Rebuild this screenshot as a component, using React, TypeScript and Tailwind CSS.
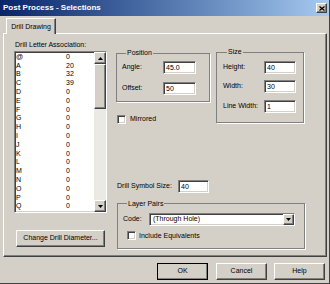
import React from "react";

const rows: [string, string][] = [
  ["@", "0"], ["A", "20"], ["B", "32"], ["C", "39"], ["D", "0"], ["E", "0"],
  ["F", "0"], ["G", "0"], ["H", "0"], ["I", "0"], ["J", "0"], ["K", "0"],
  ["L", "0"], ["M", "0"], ["N", "0"], ["O", "0"], ["P", "0"], ["Q", "0"],
];

// classic win32 bevels
const sunken =
  "bg-white border border-t-[#808080] border-l-[#808080] border-b-white border-r-white shadow-[inset_1px_1px_0_#404040,inset_-1px_-1px_0_#d4d0c8]";
const raised =
  "bg-[#d4d0c8] border border-t-white border-l-white border-b-[#404040] border-r-[#404040] shadow-[inset_-1px_-1px_0_#808080]";
const group = "border border-[#808080] shadow-[1px_1px_0_#fff] min-w-0";

function Arrow({ up }: { up?: boolean }) {
  return (
    <svg width="5" height="3" viewBox="0 0 5 3">
      <path d={up ? "M2.5 0 L5 3 L0 3 Z" : "M0 0 L5 0 L2.5 3 Z"} fill="#000" />
    </svg>
  );
}

function Field({ value, w }: { value: string; w: string }) {
  return (
    <div className={`${sunken} ${w} h-[13px] pl-[2px] flex items-center leading-none`}>{value}</div>
  );
}

function Check() {
  return <div className={`${sunken} w-[9px] h-[9px] shrink-0`} />;
}

function Btn({ label, w, def }: { label: string; w: string; def?: boolean }) {
  return (
    <div
      className={`${w} h-[17px] flex items-center justify-center ${
        def ? "outline outline-1 outline-[#000] -outline-offset-1 " : ""
      }${raised}`}
    >
      {label}
    </div>
  );
}

export default function App() {
  return (
    <div className="w-[330px] h-[284px] bg-[#d4d0c8] border-r border-b border-[#404040] flex flex-col text-[7px] text-black font-['Liberation_Sans',Arial,sans-serif] overflow-hidden">
      {/* title bar */}
      <div className="h-[16px] shrink-0 flex items-center justify-between pl-[3px] pr-[2px] bg-linear-to-r from-[#0a246a] to-[#a6caf0]">
        <span className="text-white font-bold text-[8px]">Post Process - Selections</span>
        <div className={`${raised} w-[11px] h-[10px] flex items-center justify-center`}>
          <svg width="6" height="5" viewBox="0 0 6 5">
            <path d="M0.5 0.5 L5.5 4.5 M5.5 0.5 L0.5 4.5" stroke="#000" strokeWidth="1.3" />
          </svg>
        </div>
      </div>

      {/* tab */}
      <div className="mt-[2px] ml-[6px] flex">
        <div className="relative z-10 -mb-[1px] w-[50px] h-[16px] bg-[#d4d0c8] border-t border-l border-r border-t-white border-l-white border-r-[#404040] shadow-[inset_-1px_0_0_#808080] flex items-start justify-center pt-[3px]">
          Drill Drawing
        </div>
      </div>

      {/* tab page */}
      <div className={`ml-[3px] w-[324px] h-[224px] shrink-0 pt-[6px] pl-[10px] flex gap-[9px] ${raised}`}>
        {/* left column */}
        <div className="w-[93px] flex flex-col">
          <div className="h-[9px] leading-[9px] pl-[1px]">Drill Letter Association:</div>
          <div className={`${sunken} mt-[2px] h-[162px] flex`}>
            <div className="flex-1 pl-[1px]">
              {rows.map(([l, v]) => (
                <div key={l} className="h-[8.8px] flex items-center leading-none">
                  <span className="w-[50px]">{l}</span>
                  <span>{v}</span>
                </div>
              ))}
            </div>
            <div className="w-[12px] flex flex-col bg-[#ebe9e4]">
              <div className={`${raised} h-[12px] flex items-center justify-center`}>
                <Arrow up />
              </div>
              <div className={`${raised} h-[45px]`} />
              <div className="flex-1" />
              <div className={`${raised} h-[12px] flex items-center justify-center`}>
                <Arrow />
              </div>
            </div>
          </div>
          <div className="mt-[17px] ml-[2px]">
            <Btn label="Change Drill Diameter..." w="w-[89px]" />
          </div>
        </div>

        {/* right column */}
        <div className="flex flex-col">
          <div className="flex gap-[6px] items-start">
            <div className="flex flex-col">
              <fieldset className={`${group} mt-[9px] w-[94px] h-[53px] pt-[4px] pl-[5px]`}>
                <legend className="ml-[4px] px-[1px] leading-[8px]">Position</legend>
                <div className="flex items-center">
                  <span className="w-[41px]">Angle:</span>
                  <Field value="45.0" w="w-[33px]" />
                </div>
                <div className="flex items-center mt-[8px]">
                  <span className="w-[41px]">Offset:</span>
                  <Field value="50" w="w-[33px]" />
                </div>
              </fieldset>
              <div className="mt-[12px] ml-[1px] flex items-center gap-[4px]">
                <Check />
                <span>Mirrored</span>
              </div>
            </div>

            <fieldset className={`${group} mt-[8px] w-[88px] h-[75px] pt-[5px] pl-[6px]`}>
              <legend className="ml-[4px] px-[1px] leading-[8px]">Size</legend>
              <div className="flex items-center">
                <span className="w-[41px]">Height:</span>
                <Field value="40" w="w-[32px]" />
              </div>
              <div className="flex items-center mt-[6px]">
                <span className="w-[41px]">Width:</span>
                <Field value="30" w="w-[32px]" />
              </div>
              <div className="flex items-center mt-[7px]">
                <span className="w-[41px]">Line Width:</span>
                <Field value="1" w="w-[32px]" />
              </div>
            </fieldset>
          </div>

          <div className="mt-[55px] ml-[1px] flex items-center">
            <span className="w-[61px]">Drill Symbol Size:</span>
            <Field value="40" w="w-[31px]" />
          </div>

          <fieldset className={`${group} mt-[7px] ml-[1px] w-[188px] h-[49px] pt-[5px] pl-[5px]`}>
            <legend className="ml-[4px] px-[1px] leading-[8px]">Layer Pairs</legend>
            <div className="flex items-center">
              <span className="w-[26px]">Code:</span>
              <div className={`${sunken} w-[146px] h-[13px] flex items-center`}>
                <span className="flex-1 pl-[3px]">(Through Hole)</span>
                <div className={`${raised} w-[11px] h-full flex items-center justify-center`}>
                  <Arrow />
                </div>
              </div>
            </div>
            <div className="mt-[5px] ml-[4px] flex items-center gap-[3px]">
              <Check />
              <span>Include Equivalents</span>
            </div>
          </fieldset>
        </div>
      </div>

      {/* dialog buttons */}
      <div className="mt-[6px] pr-[4px] flex justify-end gap-[7px]">
        <Btn label="OK" w="w-[51px]" def />
        <div className="ml-[1px]">
          <Btn label="Cancel" w="w-[51px]" />
        </div>
        <Btn label="Help" w="w-[51px]" />
      </div>
    </div>
  );
}
